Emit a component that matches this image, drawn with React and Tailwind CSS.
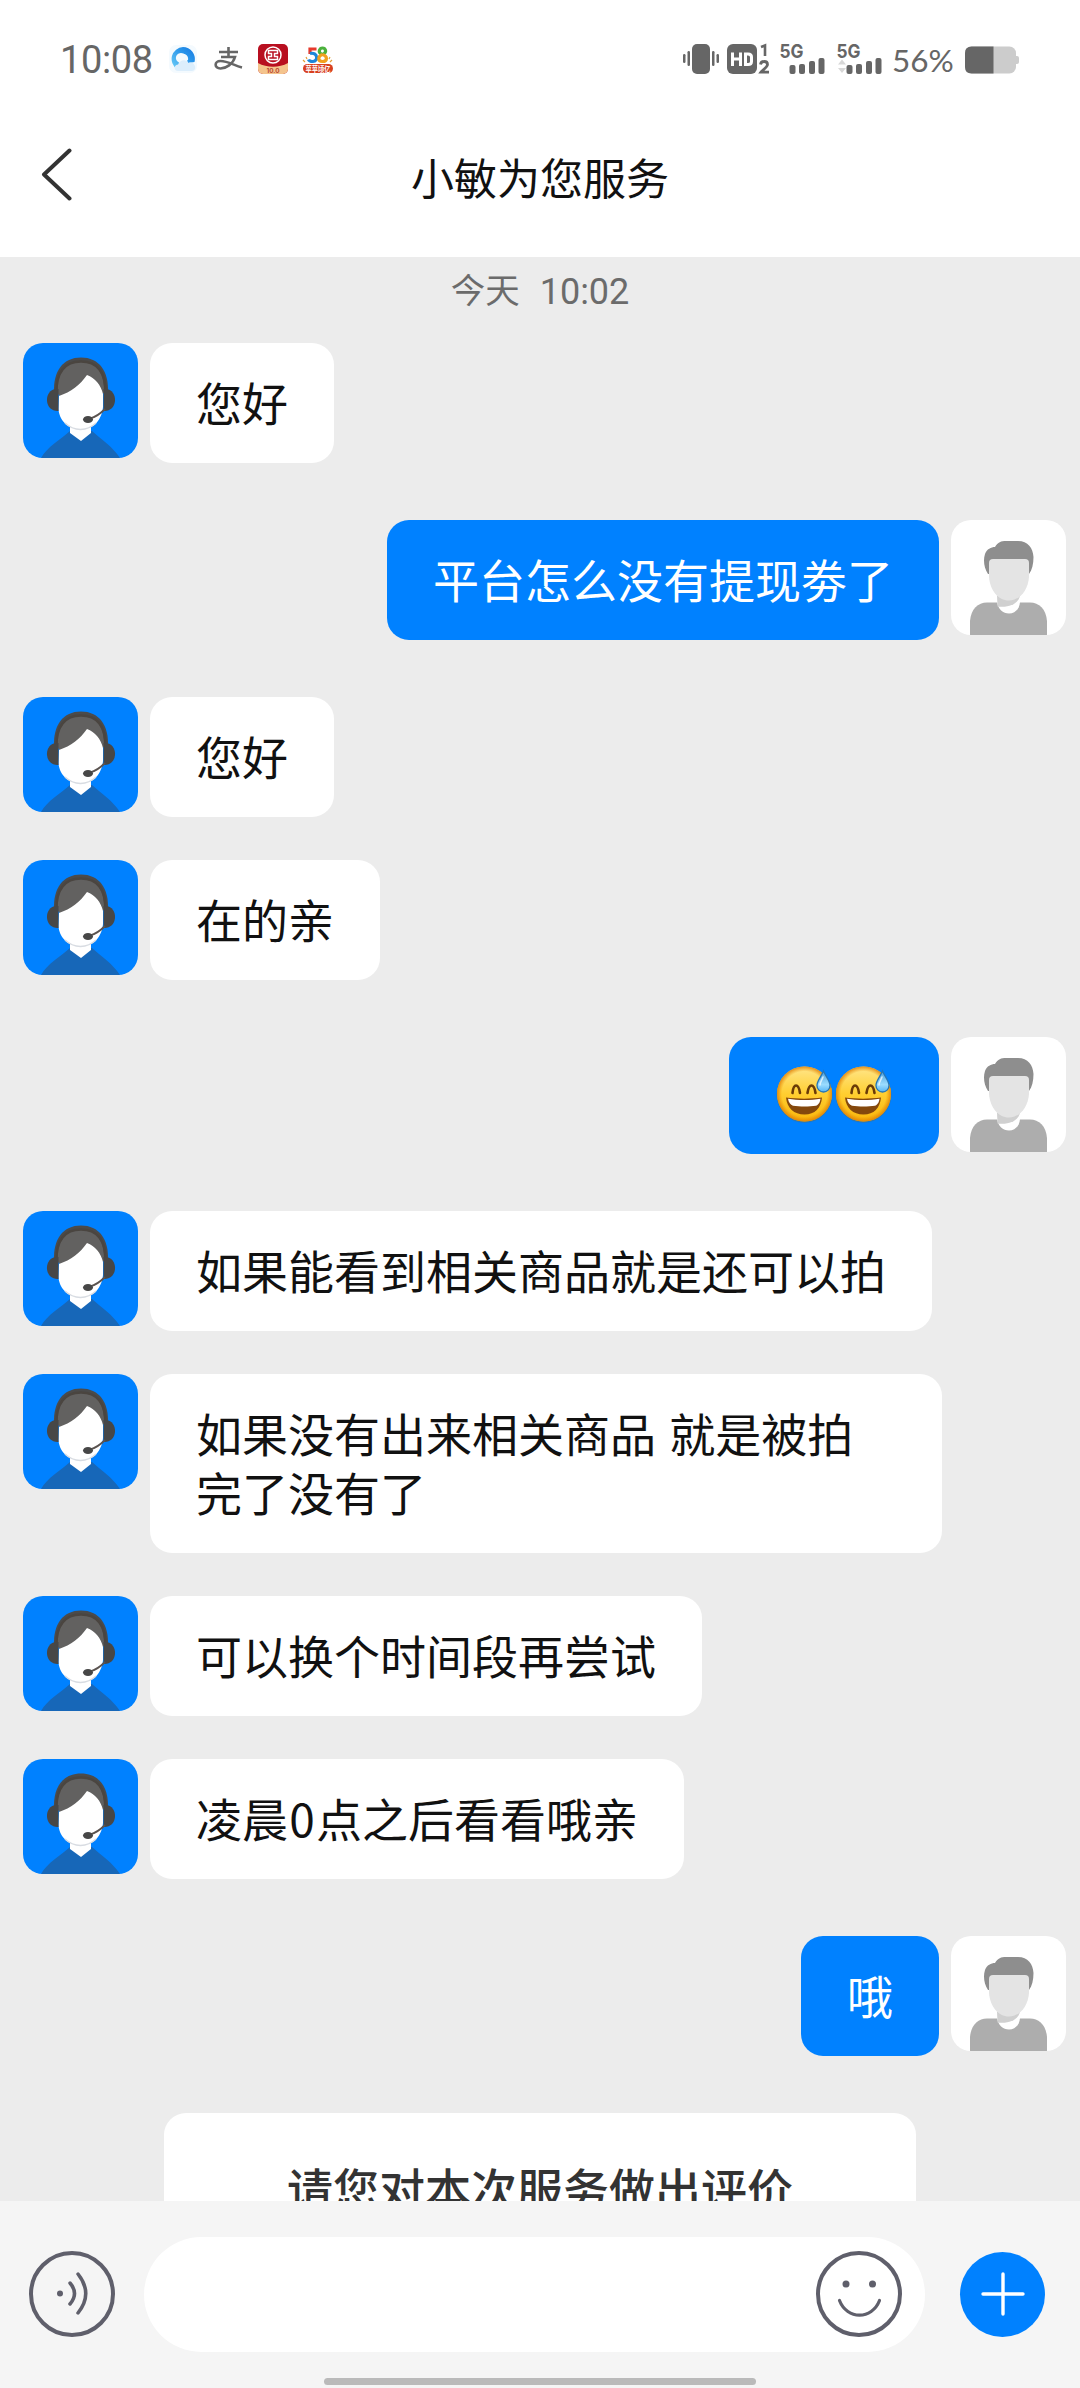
const AgentAvatar = () => (
  <div className="size-[115px] shrink-0 overflow-hidden rounded-[20px] bg-[#0081ff]">
    <svg viewBox="0 0 115 115" className="block size-full">
      <path d="M18 115C25 103 36 98 47 88H69C80 98 89 103 97 115Z" fill="#1767b8" />
      <path d="M47 78H68V90L58 98L47 90Z" fill="#fff" />
      <path d="M31 50C30 28 40 14.500 58 14.500S86 28 85 50Z" fill="#4b4b4b" />
      <path d="M34 50C34 29 42 19 58 19S81 29 81 50L70 56H40Z" fill="#626160" />
      <path d="M36 53C48 49 57 42 64 32C72 35 78 42 80 51V64C79 75 72 86.500 58 86.500S36 76 35.500 66Z" fill="#fff" />
      <path d="M42 80C51 88.500 64 88.500 73 80" fill="none" stroke="#d8dce2" strokeWidth="1.500" />
      <path d="M33.500 50C33 29 42 18.500 58 18.500S83 29 82.500 50" fill="none" stroke="#4a4540" strokeWidth="2.500" />
      <path d="M35.500 46C27 45 23.500 52 24 58C24.500 64 29 68.500 35.500 68Z" fill="#474747" />
      <path d="M80.500 46C89 45 92.500 52 92 58C91.500 64 87 68.500 80.500 68Z" fill="#474747" />
      <path d="M67 75.500C73 74 78 70 82 66" fill="none" stroke="#5a5350" strokeWidth="1.800" />
      <ellipse cx="65" cy="76.500" rx="5" ry="3.500" fill="#474747" />
    </svg>
  </div>
);

const UserAvatar = () => (
  <div className="size-[115px] shrink-0 overflow-hidden rounded-[20px] bg-white">
    <svg viewBox="0 0 115 115" className="block size-full">
      <path d="M19 115V101C20 89 27 82.500 36 82.500H79C88 82.500 95 89 96 101V115Z" fill="#adadad" />
      <path d="M46 82H69C68.500 89 64 93.500 58 93.500S47 89 46 82Z" fill="#fff" />
      <path d="M46 76H69C67 84 58 88 46.500 86.500Z" fill="#d0d0d0" />
      <path d="M37 54C33 48 32 40 34 34C36 29 40 27 44 27C47 22 50 21 55 21H67C77 21 82 28 82.500 37C82.500 44 81 50 78 54Z" fill="#8e8e8e" />
      <path d="M42 39H74Q78 39 78 43V57C77 70 69 80.500 58 80.500S39 70 38 57V43Q38 39 42 39Z" fill="#e4e4e4" />
    </svg>
  </div>
);

const SweatSmile = ({ id }) => (
  <svg viewBox="0 0 59 59" className="block size-[59px]">
    <defs>
      <linearGradient id={id + "face"} x1="0" y1="0" x2="0" y2="1">
        <stop offset="0" stopColor="#ffe68a" />
        <stop offset=".5" stopColor="#ffce30" />
        <stop offset="1" stopColor="#f9b60c" />
      </linearGradient>
      <radialGradient id={id + "rim"} cx=".5" cy=".5" r=".5">
        <stop offset=".82" stopColor="#e88a00" stopOpacity="0" />
        <stop offset="1" stopColor="#dc7d08" stopOpacity=".85" />
      </radialGradient>
      <linearGradient id={id + "drop"} x1="0" y1="0" x2="0" y2="1">
        <stop offset="0" stopColor="#4a9fdc" />
        <stop offset=".65" stopColor="#9bdcff" />
        <stop offset="1" stopColor="#55b4f4" />
      </linearGradient>
    </defs>
    <circle cx="29.500" cy="28.800" r="28" fill="#7c642f" opacity=".35" />
    <circle cx="29.500" cy="28" r="27.500" fill={"url(#" + id + "face)"} />
    <circle cx="29.500" cy="28" r="27.500" fill={"url(#" + id + "rim)"} />
    <path d="M17.500 27C18.500 17 23.500 17 25 27M32.500 27C34 17 39 17 40.500 27" fill="none" stroke="#6a3b08" strokeWidth="2.600" strokeLinecap="round" />
    <path d="M11 31.500C22 33 36 33 47 31.500C46 42 40 48.500 29.500 48.500S12 42 11 31.500Z" fill="#84480d" />
    <path d="M13 32.700C23 34.400 36 34.400 45.500 32.700C45 37 43 39 41 39.700C34 40.800 25 40.800 18 39.700C15.500 38.800 13.500 36.500 13 32.700Z" fill="#fff" />
    <path d="M48.500 5C51 11 55 15 55 19.500A6.500 6.500 0 0 1 42 19.500C42 15 46 11 48.500 5Z" fill={"url(#" + id + "drop)"} stroke="#2675b5" strokeWidth="1.300" />
    <path d="M45 19C45 16 47 14 48 11" fill="none" stroke="#fff" strokeWidth="1.500" opacity=".7" strokeLinecap="round" />
  </svg>
);

const Row = ({ mine, gap = "mb-[43px]", narrow, children }) => (
  <div className={"flex items-start gap-3 " + gap + (mine ? " flex-row-reverse pr-[14px]" : " pl-[23px]")}>
    {mine ? <UserAvatar /> : <AgentAvatar />}
    <div
      className={
        "max-w-[792px] rounded-[22px] text-[46px] leading-[59px] " +
        (mine ? "bg-[#0081ff] text-white " : "bg-white text-[#111] ") +
        (narrow ? "px-[46px] py-[29px]" : "px-[46px] pt-[29px] pb-[32px]")
      }
    >
      {children}
    </div>
  </div>
);

const Signal = ({ arrows }) => (
  <svg viewBox="0 0 46 32" className="h-8 w-[46px] overflow-visible">
    <text x="-0.500" y="15" fontFamily="Inter" fontWeight="700" fontSize="19" textLength="24" lengthAdjust="spacingAndGlyphs" fill="#666">5G</text>
    {arrows && <path d="M5 16.500L9 21.500H1ZM5 30L9 25H1Z" fill="#d8d8d8" />}
    <g fill="#666">
      <rect x="9.500" y="22" width="6" height="9" rx="2" />
      <rect x="19" y="21" width="6" height="10" rx="2" />
      <rect x="29" y="18" width="6" height="13" rx="2" />
      <rect x="38.500" y="15" width="6" height="16" rx="2" />
    </g>
  </svg>
);

const StatusBar = () => (
  <div className="flex h-[118px] items-center pl-[60px]">
    <div className="w-[94px] pt-0.5 font-[Roboto] text-[38px] leading-[40px] tracking-[-0.400px] text-[#666]">10:08</div>
    <svg viewBox="0 0 30 30" className="ml-[14px] size-[30px]">
      <defs>
        <linearGradient id="ring" x1="0" y1="1" x2="1" y2="0">
          <stop offset="0" stopColor="#6fd0f8" />
          <stop offset=".6" stopColor="#2a96ea" />
          <stop offset="1" stopColor="#1678e2" />
        </linearGradient>
      </defs>
      <rect x="1" y="1" width="28" height="28" rx="7" fill="#f4fafe" />
      <path d="M15 3A12 12 0 0 1 26.500 18L20 19L17 11A5 5 0 1 0 11 18.500L9 25A12 12 0 0 1 15 3Z" fill="url(#ring)" />
      <path d="M14 10A5 5 0 0 1 20 16L15 19L11 18A5 5 0 0 1 14 10Z" fill="#f4fafe" />
      <path d="M10 27C5.500 27 5.500 20.500 10.500 20.500C12 15.500 18 15 20.500 19C27 16.500 30 27 24 27Z" fill="#dceefc" />
    </svg>
    <svg viewBox="0 0 30 24" className="ml-4 h-6 w-[30px]">
      <path d="M5 5H24M14.500 0V10M7 10H21C19 17 12 21.500 6.500 21.500C0 21.500 0 14 6.500 14C14 14 20 18.500 28 20.500" fill="none" stroke="#666" strokeWidth="2.600" />
    </svg>
    <svg viewBox="0 0 30 30" className="ml-[14px] size-[30px]">
      <defs>
        <clipPath id="tile"><rect width="30" height="30" rx="5" /></clipPath>
      </defs>
      <g clipPath="url(#tile)">
        <rect width="30" height="30" fill="#b80f20" />
        <path d="M0 19C9 24 21 24 30 19V30H0Z" fill="#f4c48d" />
      </g>
      <circle cx="15" cy="11" r="8" fill="#b80f20" stroke="#fff" strokeWidth="1.500" />
      <path d="M10.500 6.500H19.500V9.500H16.500V12.500H19.500V15.500H10.500V12.500H13.500V9.500H10.500Z" fill="none" stroke="#fff" strokeWidth="1.500" />
      <text x="15" y="29" textAnchor="middle" fontFamily="Inter" fontWeight="600" fontSize="6.500" fill="#b5402a">10.0</text>
    </svg>
    <svg viewBox="0 0 32 30" className="ml-[14px] h-[30px] w-8 overflow-visible">
      <g fill="none" strokeWidth="3.200">
        <path d="M14.500 5H8V10" stroke="#e6392c" />
        <path d="M8 9.500C16 7.500 16.500 17.500 11 17.500C9 17.500 7 17 6.500 15.500" stroke="#1c86d8" />
        <path d="M20 10.500C15 8 18 4 20.500 4S26 8 20.500 10.500" stroke="#4bb13c" />
        <path d="M20.500 10.500C15.500 12 15.500 17.500 20.500 17.500S26 12 20.500 10.500" stroke="#f2a01e" />
      </g>
      <path d="M1 16L3 18M30 16L28 18M4 13L5 15M28 13L27 15" stroke="#e3a03a" strokeWidth="1.200" />
      <rect x="1" y="20" width="30" height="9" rx="4.500" fill="#d8401f" />
      <text x="16" y="27.500" textAnchor="middle" fontFamily="Noto Sans CJK SC" fontWeight="700" fontSize="8" textLength="25" lengthAdjust="spacingAndGlyphs" fill="#fff">苹苹顷亿</text>
    </svg>

    <svg viewBox="0 0 38 32" className="ml-[348px] h-8 w-[38px]" fill="#666">
      <rect x="10" y="1" width="18" height="30" rx="5" />
      <rect x="1" y="11" width="2.500" height="9" rx="1.200" />
      <rect x="5.500" y="8" width="2.500" height="15" rx="1.200" />
      <rect x="30" y="8" width="2.500" height="15" rx="1.200" />
      <rect x="34.500" y="11" width="2.500" height="9" rx="1.200" />
    </svg>
    <svg viewBox="0 0 44 32" className="ml-[7px] h-8 w-[44px]">
      <rect x="0" y="1" width="30" height="30" rx="6" fill="#666" />
      <path d="M5.500 9.500V23M13.500 9.500V23M5.500 16H13.500M18.500 11H21Q24.500 11 24.500 14V18.500Q24.500 21.500 21 21.500H18.500Z" fill="none" stroke="#fff" strokeWidth="3" />
      <path d="M34 4L38 2.500V13" fill="none" stroke="#666" strokeWidth="2.600" />
      <path d="M33.500 21.500C34 17.500 40.500 17.500 40.500 21.500C40.500 24 36 26.500 34 29.200H42" fill="none" stroke="#666" strokeWidth="2.800" />
    </svg>
    <div className="ml-[9px]"><Signal /></div>
    <div className="ml-[11px]"><Signal arrows /></div>
    <div className="ml-[9px] w-[64px] pt-0.5 font-[Lato] text-[31.500px] leading-[40px] text-[#666]">56%</div>
    <svg viewBox="0 0 56 30" className="ml-[9px] mt-0.5 h-[30px] w-14">
      <rect x="0" y="1.500" width="51" height="27" rx="6.500" fill="#ccc" />
      <path d="M51 11H52Q54 11 54 13V17Q54 19 52 19H51Z" fill="#ccc" />
      <path d="M6.500 1.500H28.500V28.500H6.500Q0 28.500 0 22V8Q0 1.500 6.500 1.500Z" fill="#666" />
    </svg>
  </div>
);

export default function App() {
  return (
    <div className="flex h-[2388px] w-[1080px] flex-col overflow-hidden bg-[#ececec] font-['Noto_Sans_CJK_SC',sans-serif]">
      <header className="h-[257px] shrink-0 bg-white">
        <StatusBar />
        <div className="flex h-[118px] items-center">
          <svg viewBox="0 0 32 54" className="mb-1 ml-[41px] h-[54px] w-8">
            <path d="M28.500 2.500L3 26.500L28.500 50.500" fill="none" stroke="#333" strokeWidth="4" strokeLinecap="round" strokeLinejoin="round" />
          </svg>
          <h1 className="flex-1 pr-[73px] pb-[3px] text-center text-[43px] leading-[60px] text-[#111]">小敏为您服务</h1>
        </div>
      </header>

      <main className="flex min-h-0 flex-1 flex-col overflow-hidden">
        <div className="mb-[9px] flex h-[77px] shrink-0 items-start justify-center gap-5 pt-[6px] text-[34.500px] leading-[50px] text-[#6b6b6b]">
          <span>今天</span>
          <span className="pt-1 font-[Roboto] text-[36px]">10:02</span>
        </div>
        <Row gap="mb-[57px]">您好</Row>
        <Row mine gap="mb-[57px]">平台怎么没有提现劵了</Row>
        <Row>您好</Row>
        <Row gap="mb-[57px]">在的亲</Row>
        <Row mine narrow gap="mb-[57px]">
          <div className="flex"><SweatSmile id="a" /><SweatSmile id="b" /></div>
        </Row>
        <Row>如果能看到相关商品就是还可以拍</Row>
        <Row><div className="w-[700px] [word-spacing:3px]">如果没有出来相关商品 就是被拍<br />完了没有了</div></Row>
        <Row>可以换个时间段再尝试</Row>
        <Row gap="mb-[57px]">凌晨<span className="inline-block w-[28px] text-center">0</span>点之后看看哦亲</Row>
        <Row mine gap="mb-[57px]">哦</Row>
        <div className="mx-auto h-[200px] w-[752px] shrink-0 rounded-[22px] bg-white pt-[44px] text-center text-[46px] leading-[60px] font-medium text-[#333]">
          请您对本次服务做出评价
        </div>
      </main>

      <footer className="h-[187px] shrink-0 bg-[#f5f5f5] pt-9">
        <div className="flex items-center pl-[29px]">
          <svg viewBox="0 0 86 86" className="mb-px size-[86px]" fill="none" stroke="#5f5f6b" strokeLinecap="round">
            <circle cx="43" cy="43" r="41" strokeWidth="4" />
            <circle cx="31" cy="42.500" r="3" fill="#5f5f6b" stroke="none" />
            <path d="M41 32Q50 42.500 41 53M49 23Q64.500 42.500 49 62" strokeWidth="3.500" />
          </svg>
          <div className="ml-[29px] flex h-[115px] w-[781px] items-center justify-end rounded-full bg-white pr-[23px]">
            <svg viewBox="0 0 86 86" className="mb-px size-[86px]" fill="none" stroke="#5f5f6b" strokeLinecap="round">
              <circle cx="43" cy="43" r="41" strokeWidth="4" />
              <g fill="#5f5f6b" stroke="none">
                <circle cx="30" cy="33" r="3.500" />
                <circle cx="56.500" cy="33" r="3.500" />
              </g>
              <path d="M23.500 49.500C31 69 56 69 63.500 49.500" strokeWidth="3.200" />
            </svg>
          </div>
          <div className="mb-px ml-[35px] flex size-[85px] items-center justify-center rounded-full bg-[#0081ff]">
            <svg viewBox="0 0 44 44" className="size-11">
              <path d="M22 2V42M2 22H42" stroke="#fff" strokeWidth="3.400" strokeLinecap="round" />
            </svg>
          </div>
        </div>
        <div className="mx-auto mt-[26px] h-[7px] w-[432px] rounded-full bg-[#bababa]" />
      </footer>
    </div>
  );
}
